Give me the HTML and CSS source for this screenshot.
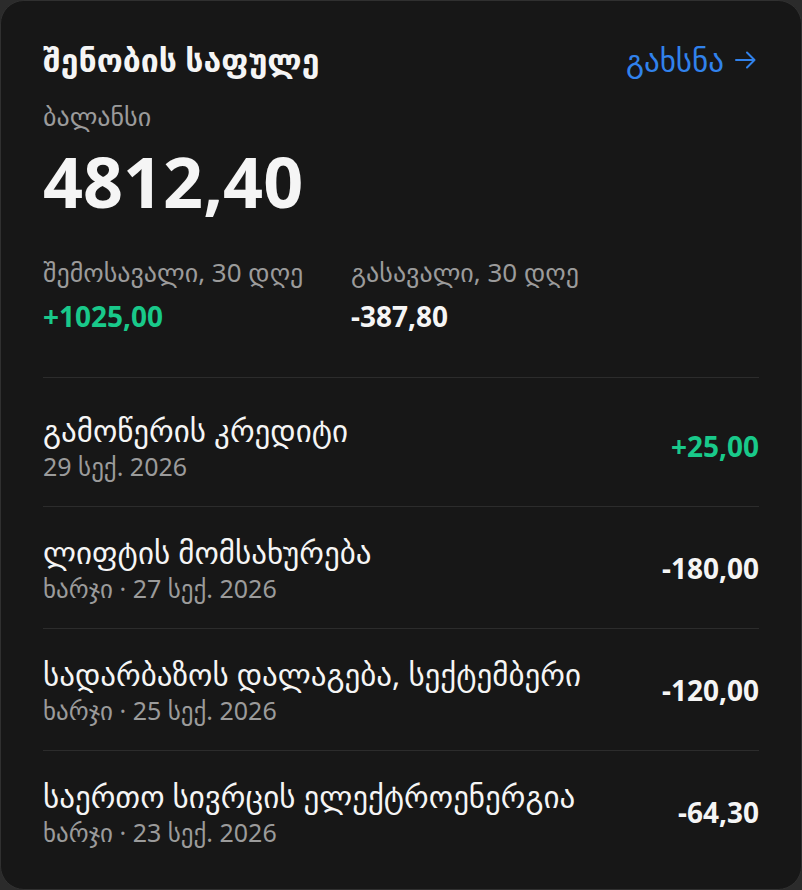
FILE: index.html
```html
<!DOCTYPE html>
<html lang="ka">
    <head>
        <meta charset="UTF-8">
        <meta name="viewport" content="width=device-width, initial-scale=1.0">
        <title>შენობის საფულე</title>
        <link rel="stylesheet" href="styles.css">
    </head>
    <body>
        <div class="wallet">
            <div class="wallet-head">
                <h2 class="wallet-title">შენობის საფულე</h2>
                <a class="open-link" href="#">გახსნა
                    <svg class="arrow" width="21" height="22" viewBox="0 0 21 22" fill="none" stroke="currentColor" stroke-width="2" stroke-linecap="round" stroke-linejoin="round">
                        <path d="M1 11h18.5M12 3.5 19.5 11 12 18.5"/>
                    </svg>
                </a>
            </div>

            <div class="label">ბალანსი</div>
            <div class="balance">4812,40</div>

            <div class="stats">
                <div class="stat">
                    <div class="label">შემოსავალი, 30 დღე</div>
                    <div class="stat-value income">+1025,00</div>
                </div>
                <div class="stat">
                    <div class="label">გასავალი, 30 დღე</div>
                    <div class="stat-value">-387,80</div>
                </div>
            </div>

            <ul class="tx-list">
                <li class="tx">
                    <div class="tx-info">
                        <div class="tx-name">გამოწერის კრედიტი</div>
                        <div class="tx-meta">29 სექ. 2026</div>
                    </div>
                    <div class="tx-amount income">+25,00</div>
                </li>
                <li class="tx">
                    <div class="tx-info">
                        <div class="tx-name">ლიფტის მომსახურება</div>
                        <div class="tx-meta">ხარჯი · 27 სექ. 2026</div>
                    </div>
                    <div class="tx-amount">-180,00</div>
                </li>
                <li class="tx">
                    <div class="tx-info">
                        <div class="tx-name">სადარბაზოს დალაგება, სექტემბერი</div>
                        <div class="tx-meta">ხარჯი · 25 სექ. 2026</div>
                    </div>
                    <div class="tx-amount">-120,00</div>
                </li>
                <li class="tx">
                    <div class="tx-info">
                        <div class="tx-name">საერთო სივრცის ელექტროენერგია</div>
                        <div class="tx-meta">ხარჯი · 23 სექ. 2026</div>
                    </div>
                    <div class="tx-amount">-64,30</div>
                </li>
            </ul>
        </div>
    </body>
</html>
```

FILE: styles.css
```css
body {
    margin: 0;
    background-color: #2b2b2b;
    font-family: "Noto Sans", "DejaVu Sans", sans-serif;
    color: #f5f5f5;
}
.wallet {
    box-sizing: border-box;
    height: 890px;
    padding: 41px 42px 0;
    border: 1px solid #303030;
    border-radius: 24px;
    background-color: #171717;
}
.wallet-head {
    display: flex;
    justify-content: space-between;
    align-items: center;
}
.wallet-title {
    margin: 0;
    font-size: 32px;
    line-height: 36px;
    font-weight: 600;
}
.open-link {
    display: flex;
    align-items: center;
    gap: 11px;
    margin-right: 3px;
    color: #3182ec;
    text-decoration: none;
    font-size: 31px;
    line-height: 36px;
}
.label {
    margin-top: 21px;
    font-size: 26px;
    line-height: 34px;
    color: #9b9b9b;
}
.balance {
    margin-top: 8px;
    font-size: 70px;
    line-height: 80px;
    font-weight: 700;
}
.stats {
    display: flex;
    margin-top: 34px;
    padding-bottom: 43px;
    border-bottom: 1px solid #2c2c2c;
}
.stat {
    width: 308px;
}
.stat .label {
    margin-top: 0;
}
.stat-value {
    margin-top: 9px;
    font-size: 28px;
    line-height: 36px;
    font-weight: 700;
}
.income {
    color: #19c98a;
}
.tx-list {
    list-style: none;
    margin: 0;
    padding: 7px 0 0;
}
.tx {
    display: flex;
    justify-content: space-between;
    align-items: center;
    padding: 26px 0 25px;
    border-bottom: 1px solid #2c2c2c;
}
.tx:last-child {
    border-bottom: none;
}
.tx-name {
    font-size: 31px;
    line-height: 38px;
}
.tx-meta {
    margin-top: 2px;
    font-size: 25px;
    line-height: 30px;
    color: #9b9b9b;
}
.tx-amount {
    font-size: 28px;
    line-height: 36px;
    font-weight: 700;
}
```
